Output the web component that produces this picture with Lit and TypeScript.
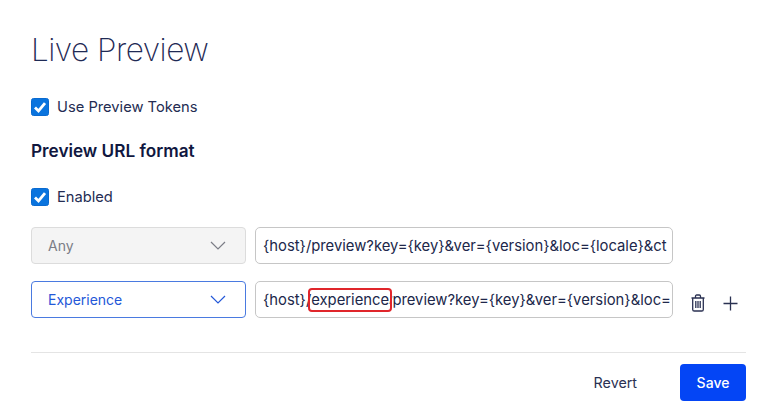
import { LitElement, html, css } from 'lit'
import { customElement } from 'lit/decorators.js'

const check = html`<svg class="check" viewBox="0 0 18 18" width="18" height="18">
  <rect x="0.5" y="0.5" width="17" height="17" rx="2" fill="#0a74de" stroke="#0a6ad0" />
  <path d="M4 9.4 L7.5 12.9 L14 5.2" fill="none" stroke="#fff" stroke-width="2.8" />
</svg>`

const chevron = html`<svg class="chevron" viewBox="0 0 16 9" width="16" height="9">
  <path d="M1 1 L8 8 L15 1" fill="none" stroke="currentColor" stroke-width="1.2" />
</svg>`

@customElement('app-root')
export class AppRoot extends LitElement {
  static styles = css`
    :host {
      display: block;
      width: 757px;
      height: 413px;
      background: #fff;
      box-sizing: border-box;
      padding: 28px 11px 0 31px;
      font-family: Inter, 'Liberation Sans', sans-serif;
      color: #1b2550;
      overflow: hidden;
    }

    h1 {
      margin: 0;
      font-size: 31.5px;
      line-height: 43px;
      letter-spacing: -0.5px;
      font-weight: 200;
      color: #1f2a55;
    }

    .option {
      display: flex;
      align-items: center;
      gap: 8px;
      font-size: 14.7px;
      line-height: 20px;
      color: #242c52;
    }

    .tokens {
      margin-top: 26px;
    }

    h2 {
      margin: 24px 0 0;
      font-size: 17.2px;
      line-height: 20px;
      font-weight: 600;
      color: #10173f;
    }

    .enabled {
      margin-top: 26px;
    }

    .rows {
      margin-top: 20px;
      display: flex;
      flex-direction: column;
      gap: 17px;
    }

    .row {
      display: flex;
      align-items: center;
      gap: 9px;
    }

    .select {
      width: 215px;
      height: 37px;
      box-sizing: border-box;
      display: flex;
      align-items: center;
      justify-content: space-between;
      padding: 0 19px 0 16px;
      border: 1px solid #dcdcdc;
      border-radius: 4px;
      background: #f4f4f4;
      color: #7b7d86;
      font-size: 14px;
    }

    .select.active {
      border-color: #4a7ae0;
      background: #fff;
      color: #2458d8;
    }

    .field {
      width: 418px;
      height: 37px;
      box-sizing: border-box;
      display: flex;
      align-items: center;
      padding: 0 4px 0 7px;
      border: 1px solid #c6c6c6;
      border-radius: 5px;
      font-size: 14.8px;
      color: #20274a;
      white-space: nowrap;
    }

    .mark {
      position: relative;
    }

    .mark::after {
      content: '';
      position: absolute;
      left: -3px;
      right: -3px;
      top: -3px;
      bottom: -3px;
      border: 2px solid #e0262b;
      border-radius: 4px;
    }

    /* mostly hidden behind the red box in the screenshot */
    .slash {
      font-size: 9px;
    }

    .actions {
      display: flex;
      align-items: center;
      gap: 18px;
      margin: 7px 0 0 9px;
      color: #2a3152;
    }

    hr {
      margin: 34px 0 0;
      border: 0;
      border-top: 1px solid #e4e4e4;
    }

    .footer {
      margin-top: 11px;
      display: flex;
      justify-content: flex-end;
      align-items: center;
      gap: 43px;
      font-size: 14.3px;
    }

    .revert {
      color: #2a3152;
    }

    .save {
      width: 66px;
      height: 37px;
      display: flex;
      align-items: center;
      justify-content: center;
      border-radius: 4px;
      background: #0445f5;
      color: #fff;
      font-size: 14px;
      font-weight: 500;
    }
  `

  render() {
    return html`
      <h1>Live Preview</h1>
      <div class="option tokens">${check}<span>Use Preview Tokens</span></div>
      <h2>Preview URL format</h2>
      <div class="option enabled">${check}<span>Enabled</span></div>
      <div class="rows">
        <div class="row">
          <div class="select"><span>Any</span>${chevron}</div>
          <div class="field">{host}/preview?key={key}&amp;ver={version}&amp;loc={locale}&amp;ct</div>
        </div>
        <div class="row">
          <div class="select active"><span>Experience</span>${chevron}</div>
          <div class="field">{host}/<span class="mark">experience</span><span class="slash">/</span>preview?key={key}&amp;ver={version}&amp;loc=</div>
          <div class="actions">
            <svg viewBox="0 0 14 18" width="14" height="18" fill="none" stroke="currentColor" stroke-width="1.3">
              <path d="M0.5 4 H13.5 M4.5 4 V2.2 C4.5 1.5 5 1 5.7 1 H8.3 C9 1 9.5 1.5 9.5 2.2 V4 M1.7 4 V15.4 C1.7 16.3 2.4 17 3.3 17 H10.7 C11.6 17 12.3 16.3 12.3 15.4 V4 M4.8 7 V14 M7 7 V14 M9.2 7 V14" />
            </svg>
            <svg viewBox="0 0 15 15" width="15" height="15" fill="none" stroke="currentColor" stroke-width="1.3">
              <path d="M7.5 0.5 V14.5 M0.5 7.5 H14.5" />
            </svg>
          </div>
        </div>
      </div>
      <hr />
      <div class="footer">
        <span class="revert">Revert</span>
        <div class="save">Save</div>
      </div>
    `
  }
}
